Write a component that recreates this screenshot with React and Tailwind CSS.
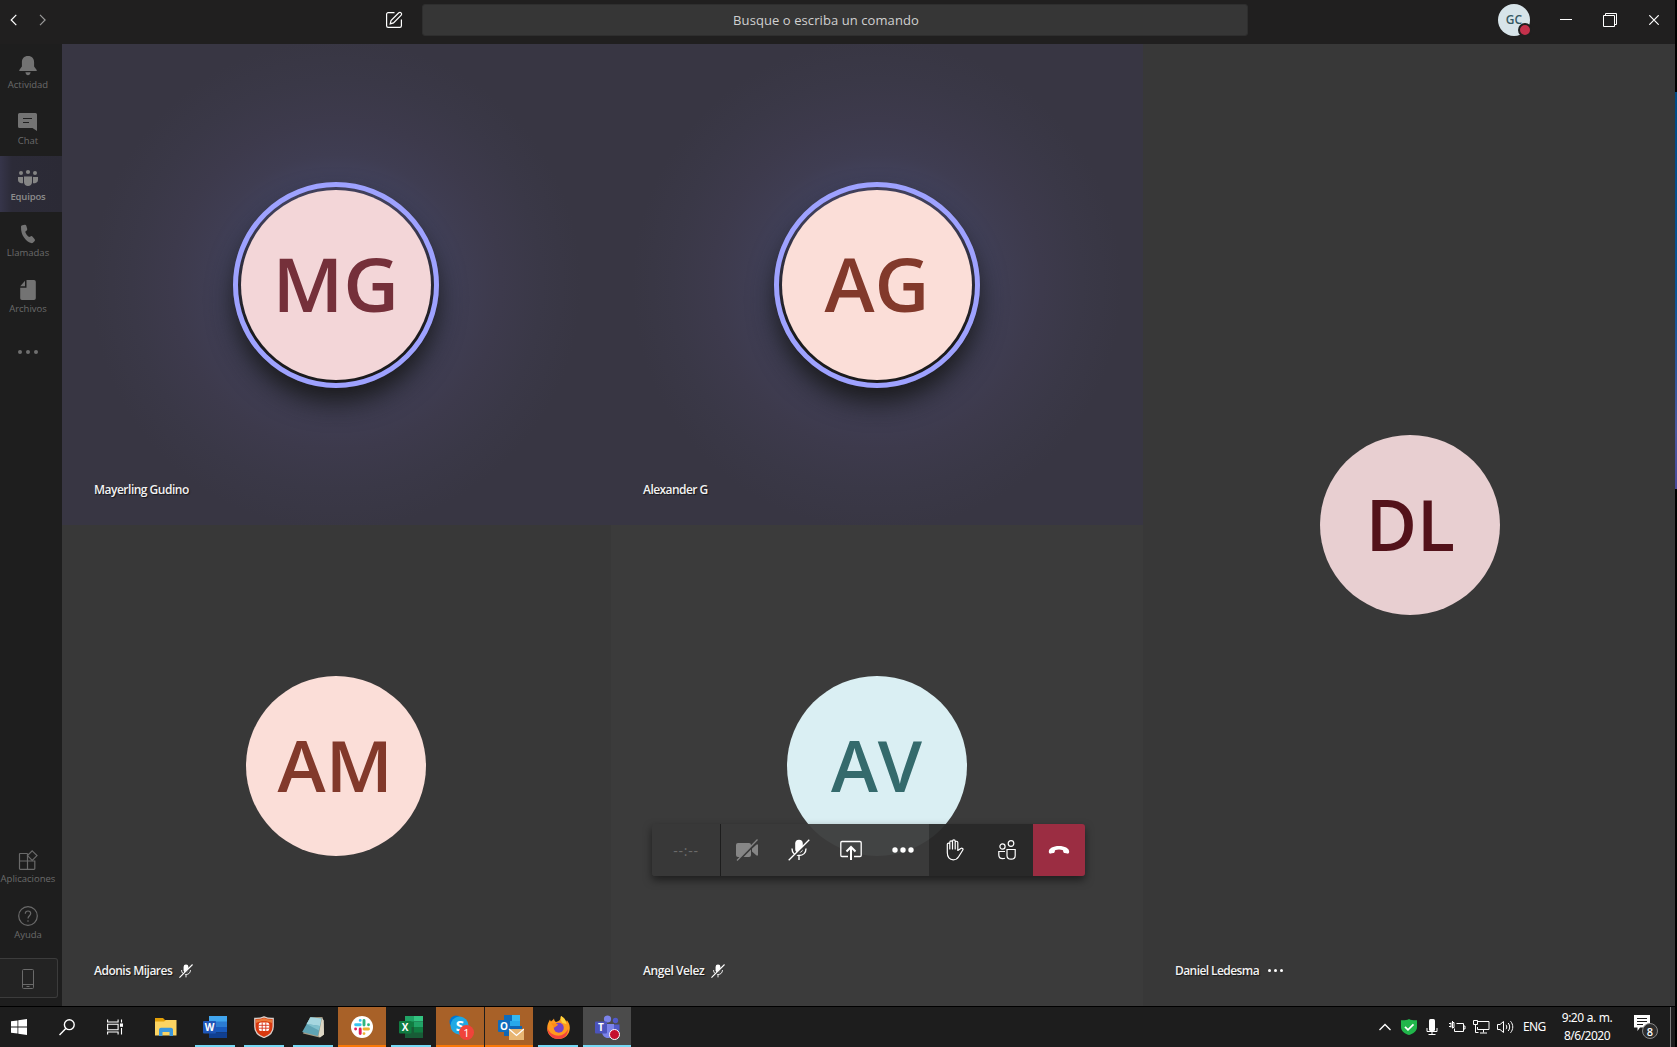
import React from "react";

/* ---------- icons ---------- */

function MicOff({ size, slash = 1.1 }) {
  return (
    <svg width={size} height={size} viewBox="0 0 22 22" fill="none">
      <rect x="7.2" y="0.8" width="7.6" height="13" rx="3.8" fill="#fff" />
      <path d="M4 9.5c0 4.3 2.8 7 7 7s7-2.700 7-7M11 16.500V21" stroke="#fff" strokeWidth="1.4" />
      <path d="M1.600 22L22 1.800" stroke="#383838" strokeWidth={slash * 2.200} />
      <path d="M.7 21.300L21.300.8" stroke="#fff" strokeWidth={slash * 1.200} />
    </svg>
  );
}

const sideIcons = {
  bell: (
    <svg width="20" height="20" viewBox="0 0 20 20" fill="currentColor">
      <path d="M10 0C6 0 3.900 2.700 3.900 6.300v4.200L1.300 14.100V15h17.400v-.9l-2.600-3.600V6.300C16.100 2.700 14 0 10 0zM7.400 16.300h5.200c-.3 2-1.300 3-2.600 3s-2.300-1-2.600-3z" />
    </svg>
  ),
  chat: (
    <svg width="20" height="20" viewBox="0 0 20 20">
      <path d="M1.500 1h16a1.500 1.500 0 0 1 1.500 1.500V19l-4.500-3H1.500A1.500 1.500 0 0 1 0 14.500v-12A1.500 1.500 0 0 1 1.500 1z" fill="currentColor" />
      <path d="M5 6.500h9M5 10.500h6" stroke="#1f1f1f" strokeWidth="1.200" />
    </svg>
  ),
  teams: (
    <svg width="20" height="20" viewBox="0 0 20 20" fill="currentColor">
      <circle cx="3" cy="5" r="2" />
      <circle cx="10" cy="4" r="2.100" />
      <circle cx="17" cy="5" r="2" />
      <path d="M6 8.500h8V14c0 2.500-1.700 4-4 4s-4-1.500-4-4zM0 9h5v6.300C2 15.300 0 14.500 0 12zM20 9h-5v6.300c3 0 5-.8 5-3.300z" />
    </svg>
  ),
  phone: (
    <svg width="20" height="20" viewBox="0 0 20 20" fill="currentColor">
      <path d="M4.300 1.300 6.800.8c.8-.1 1.300.3 1.500 1l.9 3c.2.7 0 1.200-.5 1.600L7.200 7.700c.7 2.200 2 3.900 3.900 5.200l1.900-.7c.6-.2 1.200 0 1.600.5l2.100 2.500c.4.6.4 1.200 0 1.700l-1.500 1.700c-.6.6-1.300.7-2.100.5C7.500 17.300 2.800 11 3 3c0-.9.5-1.500 1.300-1.700z" />
    </svg>
  ),
  file: (
    <svg width="20" height="20" viewBox="0 0 20 20" fill="currentColor">
      <path d="M8.500 0H16a1.800 1.800 0 0 1 1.800 1.800v16.400A1.800 1.800 0 0 1 16 20H4a1.800 1.800 0 0 1-1.800-1.800V7.800h6.300z" />
      <path d="M7 .8V6.300H2.200z" />
    </svg>
  ),
  apps: (
    <svg width="20" height="20" viewBox="0 0 20 20" fill="none" stroke="currentColor" strokeWidth="1.200">
      <path d="M9.500 3.500H2A.8.800 0 0 0 1.500 4v14.500a.8.800 0 0 0 .8.800H16a.8.800 0 0 0 .8-.8V11H1.500M9.500 3.500v15.800M9.500 11V8" />
      <path d="M14.200.8 19 5.600l-4.800 4.800-4.700-4.800z" />
    </svg>
  ),
  help: (
    <svg width="20" height="20" viewBox="0 0 20 20" fill="none" stroke="currentColor" strokeWidth="1.200">
      <circle cx="10" cy="10" r="9.300" />
      <path d="M7.300 7.800c0-1.700 1.100-2.800 2.700-2.800s2.700 1 2.700 2.500c0 2.200-2.700 2.300-2.700 5M10 14.200v1.600" />
    </svg>
  ),
};

/* ---------- top bar ---------- */

function TopBar() {
  return (
    <header className="h-[44px] shrink-0 flex items-center bg-[#201f1f] text-white">
      <div className="flex items-center w-[422px] h-[40px] mb-1 shrink-0">
        <svg className="ml-[10px]" width="8" height="12" viewBox="0 0 8 12" fill="none" stroke="#fff" strokeWidth="1.200"><path d="M6.300.8 1.200 6l5.100 5.200" /></svg>
        <svg className="ml-[21px]" width="8" height="12" viewBox="0 0 8 12" fill="none" stroke="#9a9a9a" strokeWidth="1.200"><path d="M1 .8 6.100 6 1 11.200" /></svg>
        <svg className="ml-[338px]" width="18" height="18" viewBox="0 0 18 18" fill="none" stroke="#fff" strokeWidth="1.200">
          <path d="M9.500 1.600H3.200A1.600 1.600 0 0 0 1.600 3.200v11.600c0 .9.700 1.600 1.600 1.600h11.600c.9 0 1.600-.7 1.600-1.600V8.500" />
          <path d="m5.200 12.800.8-3.300 7.800-7.700c1.600-1.300 3.700.7 2.400 2.400l-7.700 7.700z" />
        </svg>
      </div>
      <div className="w-[826px] h-[32px] mb-[4px] shrink-0 rounded-[3px] bg-[#363636] border border-[#2e2e2e] flex items-center justify-center">
        <span className="font-['Open_Sans',sans-serif] text-[13px] leading-[20px] tracking-[0.08px] text-[#d0d0d0] mb-[1px] mr-[18px] whitespace-nowrap">Busque o escriba un comando</span>
      </div>
      <div className="flex items-center h-[40px] mb-1 ml-[250px]">
        <div className="relative size-[32px] rounded-full bg-[#d7e4e9] flex items-center justify-center font-['Open_Sans',sans-serif] font-semibold text-[12px] text-[#355964]">
          GC
          <span className="absolute left-[20px] top-[19px] size-[14px] rounded-full bg-[#c4314b] border-2 border-[#201f1f]" />
        </div>
        <svg className="ml-[30px]" width="12" height="14" viewBox="0 0 12 14"><path d="M0 6.500h12" stroke="#fff" /></svg>
        <svg className="ml-[31px]" width="14" height="14" viewBox="0 0 14 14" fill="none" stroke="#fff"><path d="M.5 2.500h11v11H.5zM2.500 2.500v-2h11v11h-2" /></svg>
        <svg className="ml-[32px]" width="10" height="10" viewBox="0 0 10 10" fill="none" stroke="#fff" strokeWidth="1.200"><path d="M.3.3l9.400 9.400M9.700.3.3 9.700" /></svg>
      </div>
    </header>
  );
}

/* ---------- left rail ---------- */

function RailItem({ icon, label, active, dim }) {
  return (
    <div className={active ? "h-[56px] bg-[linear-gradient(90deg,#36354a_0%,#2c2b38_12px,#2b2a35_100%)] text-[#858585]" : dim ? "h-[56px] text-[#6a6a6a]" : "h-[56px] text-[#737373]"}>
      <div className="w-[56px] h-full flex flex-col items-center pt-[12px]">
        {sideIcons[icon]}
        <span className={active ? "mt-[2px] font-['Open_Sans',sans-serif] font-semibold text-[9.500px] leading-[14px] tracking-[-0.15px] text-[#8c8c8c] whitespace-nowrap" : "mt-[2px] font-['Open_Sans',sans-serif] font-medium text-[9.500px] leading-[14px] tracking-[0px] text-[#6b6b6b] whitespace-nowrap"}>
          {label}
        </span>
      </div>
    </div>
  );
}

function Rail() {
  return (
    <nav className="w-[62px] shrink-0 bg-[#1e1e1e] flex flex-col">
      <RailItem icon="bell" label="Actividad" />
      <RailItem icon="chat" label="Chat" />
      <RailItem icon="teams" label="Equipos" active />
      <RailItem icon="phone" label="Llamadas" />
      <RailItem icon="file" label="Archivos" />
      <div className="w-[56px] h-[56px] flex items-center justify-center gap-[4px]">
        <i className="size-[4px] rounded-full bg-[#6f6f6f]" />
        <i className="size-[4px] rounded-full bg-[#6f6f6f]" />
        <i className="size-[4px] rounded-full bg-[#6f6f6f]" />
      </div>
      <div className="mt-auto">
        <RailItem icon="apps" label="Aplicaciones" dim />
        <RailItem icon="help" label="Ayuda" dim />
      </div>
      <div className="w-[58px] h-[40px] mt-[8px] mb-[8px] rounded-r-[3px] border border-l-0 border-[#3c3c3c] bg-[#232323] flex items-center pl-[22px] pt-[2px]">
        <svg width="12" height="20" viewBox="0 0 12 20" fill="none" stroke="#6a6a6a"><rect x=".5" y=".5" width="11" height="19" rx="1" /><path d="M.5 15.500h11M4.500 17.500h3" /></svg>
      </div>
    </nav>
  );
}

/* ---------- call stage ---------- */

function Label({ name, tracking, children }) {
  return (
    <div className="absolute left-[32px] bottom-[25px] h-[20px] flex items-center text-white [text-shadow:1px_1px_1px_rgba(0,0,0,0.6)]">
      <span className={`font-['Open_Sans',sans-serif] font-semibold text-[12px] leading-[20px] whitespace-nowrap text-[#f2f2f2] ${tracking}`}>{name}</span>
      {children}
    </div>
  );
}

function Speaking({ initials, colors, name, tracking, textClass, pad = "" }) {
  return (
    <section className={`relative flex items-center justify-center overflow-hidden bg-[#373542] bg-[radial-gradient(circle_at_50%_50%,#44445f_0px,#42425c_105px,#3f3d52_130px,#3d3a4c_165px,#3a3847_205px,#383643_245px)] ${pad}`}>
      <div className="size-[206px] rounded-full border-[5px] border-[#9ea2ff] bg-[linear-gradient(180deg,#403f5a_10%,#1b1b1d_75%)] p-[3px] shadow-[0_15px_26px_rgba(24,24,24,0.95)]">
        <div className={`size-full rounded-full flex items-center justify-center font-['Open_Sans',sans-serif] font-semibold text-[75px] leading-none pb-[3px] ${colors}`}>
          <span className={textClass}>{initials}</span>
        </div>
      </div>
      <Label name={name} tracking={tracking} />
    </section>
  );
}

function Quiet({ initials, colors, bg, textClass, pad = "", children }) {
  return (
    <section className={`relative flex items-center justify-center ${bg} ${pad}`}>
      <div className={`size-[180px] rounded-full flex items-center justify-center font-['Open_Sans',sans-serif] font-semibold text-[71px] leading-none ${colors}`}>
        <span className={textClass}>{initials}</span>
      </div>
      {children}
    </section>
  );
}

function CallBar() {
  const cell = "w-[52px] h-full flex items-center justify-center";
  return (
    <div className="absolute left-[590px] top-[780px] w-[433px] h-[52px] flex rounded-[3px] overflow-visible shadow-[0_4px_8px_rgba(0,0,0,0.5)]">
      <div className="w-[68px] h-full rounded-l-[3px] bg-[#383838]/97 flex items-center justify-center text-[#6b6b6b] font-['Open_Sans',sans-serif] text-[14px] tracking-[0.8px]">--:--</div>
      <div className="w-px h-full bg-[#1d1d1d]" />
      <div className="flex bg-[#3a3a3a]/95">
        <div className={cell}>
          <svg width="22" height="22" viewBox="0 0 22 22"><rect x="0" y="4" width="15" height="14" rx="2" fill="#868686" /><path d="M16 9.500 20.500 5.500H22v11h-1.500L16 12.500z" fill="#868686" /><path d="M2 22 22.500 1.500" stroke="#3a3a3a" strokeWidth="2.200" /><path d="M1 21.500 21.500.5" stroke="#868686" strokeWidth="1.300" /></svg>
        </div>
        <div className={cell}><MicOff size={22} /></div>
        <div className={cell}>
          <svg width="22" height="22" viewBox="0 0 22 22" fill="none" stroke="#fff"><path d="M8 17.500H2A1.300 1.300 0 0 1 .8 16.200V3.800A1.300 1.300 0 0 1 2 2.500h18a1.300 1.300 0 0 1 1.200 1.300v12.400a1.300 1.300 0 0 1-1.200 1.300h-6" strokeWidth="1.300" /><path d="M11 21V8.500M6.500 12.500 11 8l4.500 4.500" strokeWidth="2" /></svg>
        </div>
        <div className={cell}>
          <svg width="22" height="6" viewBox="0 0 22 6" fill="#fff"><circle cx="3" cy="3" r="2.700" /><circle cx="11" cy="3" r="2.700" /><circle cx="19" cy="3" r="2.700" /></svg>
        </div>
      </div>
      <div className="flex bg-[#282828]/95">
        <div className={cell}>
          <svg width="18" height="22" viewBox="0 0 18 22" fill="none" stroke="#fff" strokeWidth="1.200" strokeLinejoin="round" strokeLinecap="round">
            <path d="M1.300 13.500V5.300c0-1.700 2.500-1.700 2.500 0V3.200c0-1.800 2.700-1.800 2.700 0V2.300c0-1.800 2.700-1.800 2.700 0v1.200c0-1.700 2.600-1.700 2.600 0v8l3-2c1.300-.8 2.700.5 2 1.500l-4.200 6.800c-1.200 2-2.700 3-5.300 3-3.800 0-6-2.500-6-7.300zM3.800 5.300V10M6.500 3.200V10M9.200 3.200V10" />
          </svg>
        </div>
        <div className={cell}>
          <svg className="-ml-[1px]" width="18" height="20" viewBox="0 0 18 20" fill="none" stroke="#fff" strokeWidth="1.200"><circle cx="4.500" cy="6.500" r="2.600" /><circle cx="13" cy="3.500" r="2.800" /><path d="M9 9.500h8.200v6c0 2.300-1.500 3.700-4.100 3.700S9 17.800 9 15.500zM7 11.500H.8V15c0 2.400 1.500 3.600 3.900 3.600 1 0 1.700-.1 2.300-.4" /></svg>
        </div>
      </div>
      <div className={`${cell} rounded-r-[3px] bg-[#9b2d42]`}>
        <svg width="22" height="10" viewBox="0 0 22 10" fill="#fff"><path d="M11 1C5.200 1 .8 3.200.8 6.800c0 1.300.7 2 1.900 1.800l2.600-.5c.9-.2 1.400-.7 1.500-1.600l.2-1.300c2.600-.8 5.400-.8 8 0l.2 1.300c.1.900.6 1.400 1.500 1.600l2.600.5c1.200.2 1.900-.5 1.900-1.800C21.200 3.200 16.800 1 11 1z" /></svg>
      </div>
    </div>
  );
}

function Stage() {
  return (
    <main className="relative w-[1613px] shrink-0 grid grid-cols-[549px_532px_532px]">
      <div className="grid grid-rows-2">
        <Speaking initials="MG" name="Mayerling Gudino" colors="bg-[#f3d6d8] text-[#75303a]" tracking="tracking-[-0.5px]" textClass="scale-x-[1.025]" pad="pr-[2px]" />
        <Quiet initials="AM" bg="bg-[#383838]" colors="bg-[#fbded8] text-[#82392b] pb-[3px]" textClass="scale-x-[1.025]" pad="pr-[2px]">
          <Label name="Adonis Mijares" tracking="tracking-[-0.5px]"><span className="ml-[7px]"><MicOff size={14} slash={1.500} /></span></Label>
        </Quiet>
      </div>
      <div className="grid grid-rows-2">
        <Speaking initials="AG" name="Alexander G" colors="bg-[#fbded8] text-[#82392b]" tracking="tracking-[-0.55px]" textClass="scale-x-[1.01]" />
        <Quiet initials="AV" bg="bg-[#3b3b3b]" colors="bg-[#daeff3] text-[#346a6c] pb-[3px] pr-[1px]" textClass="tracking-normal">
          <Label name="Angel Velez" tracking="tracking-[-0.43px]"><span className="ml-[7px]"><MicOff size={14} slash={1.500} /></span></Label>
        </Quiet>
      </div>
      <Quiet initials="DL" bg="bg-[#383838]" colors="bg-[#e8cfd1] text-[#53121a] pb-[4px]" textClass="scale-x-[0.985]" pad="pl-[2px]">
        <Label name="Daniel Ledesma" tracking="tracking-[-0.58px]">
          <span className="ml-[9px] mb-[2px] flex gap-[3px]"><i className="size-[3px] rounded-full bg-white" /><i className="size-[3px] rounded-full bg-white" /><i className="size-[3px] rounded-full bg-white" /></span>
        </Label>
      </Quiet>
      <CallBar />
    </main>
  );
}

/* ---------- taskbar ---------- */

function Task({ tone = "plain", children }) {
  const tones = {
    none: "bg-transparent",
    plain: "bg-transparent",
    alert: "bg-[#a86128]",
    active: "bg-[#4b4b4b]",
  };
  const lines = {
    none: "w-0",
    plain: "w-[40px] bg-[#76d9f5]",
    alert: "w-[48px] bg-[#f97808]",
    active: "w-[48px] bg-[#76d9f5]",
  };
  return (
    <div className={`w-[48px] h-[40px] flex flex-col items-center ${tones[tone]}`}>
      <div className="h-[38px] pt-[2px] flex items-center justify-center">{children}</div>
      <div className={`h-[2px] ${lines[tone]}`} />
    </div>
  );
}

function Letter({ x, y, size = 10, children }) {
  return <text x={x} y={y} fontSize={size} fontWeight="700" fill="#fff" textAnchor="middle" fontFamily="Open Sans, sans-serif">{children}</text>;
}

function Taskbar() {
  return (
    <footer className="h-[41px] w-[1675px] shrink-0 border-t border-black bg-[#1d1d1d] flex text-white">
      <div className="w-[38px] flex items-center justify-center">
        <svg width="16" height="16" viewBox="0 0 16 16" fill="#fff"><path d="M0 2.300 6.500 1.400v6.200H0zM7.300 1.300 16 0v7.600H7.300zM0 8.400h6.500v6.200L0 13.700zM7.300 8.400H16V16l-8.700-1.300z" /></svg>
      </div>
      <div className="w-[48px] ml-[5px] flex items-center justify-center">
        <svg width="16" height="17" viewBox="0 0 16 17" fill="none" stroke="#fff" strokeWidth="1.400"><circle cx="10.300" cy="5.700" r="4.900" /><path d="M6.800 9.500.5 16" /></svg>
      </div>
      <div className="w-[48px] flex items-center justify-center">
        <svg width="16" height="16" viewBox="0 0 16 16" fill="none" stroke="#fff" strokeWidth="1.100"><path d="M.6.500V3h10.500V.5M.6 15.500V13h10.500v2.500M.6 5.200h10.500v5.600H.6zM14.500.5v3M14.500 9v6.500" /><rect x="13.500" y="5" width="2.200" height="2.200" fill="#fff" /></svg>
      </div>
      <div className="ml-[3px] flex gap-px">
        <Task tone="none">
          <svg width="22" height="18" viewBox="0 0 22 18"><path d="M0 0h8l2 2h11v3H0z" fill="#e3a008" /><path d="M0 3.500h9L11 2h10.500v15.500H0z" fill="#fcd462" /><path d="M4 18v-6.500A2 2 0 0 1 6 9.800h10a2 2 0 0 1 2 1.700V18h-3.500v-4h-7v4z" fill="#3b97dd" /></svg>
        </Task>
        <Task>
          <svg width="24" height="22" viewBox="0 0 24 22"><path d="M6 0h18v6H6z" fill="#41a5ee" /><path d="M6 5.500h18V11H6z" fill="#2b7cd3" /><path d="M6 11h18v5.500H6z" fill="#185abd" /><path d="M6 16.500h18V22H6z" fill="#103f91" /><rect y="5" width="13" height="12.500" rx="1" fill="#1e56b8" /><Letter x={6.500} y={15}>W</Letter></svg>
        </Task>
        <Task>
          <svg width="20" height="22" viewBox="0 0 20 22"><path d="M10 .8c3 1.400 6 1.800 9.200 1.600v8C19.200 16 15.500 19.600 10 21.500 4.500 19.600.8 16 .8 10.400v-8C4 2.600 7 2.200 10 .8z" fill="#d9380f" stroke="#d9cfca" strokeWidth="1.300" /><path d="M10 2c2.800 1.200 5.400 1.600 8 1.500V7C13 4.500 7 4.500 2 7V3.500C4.700 3.600 7.300 3.200 10 2z" fill="#ea7a3c" /><rect x="4.800" y="6.500" width="10.400" height="8.500" rx="2" fill="#fff" /><path d="M4.800 9.300h10.400M4.800 12.200h10.400M8.200 6.500V15M11.800 6.500V15" stroke="#d7341c" strokeWidth=".9" /></svg>
        </Task>
        <Task>
          <svg width="24" height="22" viewBox="0 0 24 22"><path d="M9 1.200 21.500 1 23 18.500l-4.500 3L2 17.500z" fill="#a59c86" /><path d="m17.500 20 3.500-18 1.800 2.500.2 14-4 3z" fill="#ddd6c4" /><path d="M9.500 1.200 20.500 2.500 17 20 1.200 16z" fill="#5fa3b4" /><path d="M9.500 1.200 20.500 2.500 19 10 5.500 8z" fill="#a6d6df" /><path d="M5.500 8 19 10l-1 4.500z" fill="#7fbfcc" /></svg>
        </Task>
        <Task tone="alert">
          <svg width="22" height="22" viewBox="0 0 22 22"><circle cx="11" cy="11" r="11" fill="#fff" /><g strokeWidth="2.900" strokeLinecap="round"><path d="M9.200 4.400v.01M4.600 8.800h4.600" stroke="#36c5f0" /><path d="M13 4.400V9M17.500 8.800v.01" stroke="#2eb67d" /><path d="M17.500 13H13M13 17.600v.01" stroke="#ecb22e" /><path d="M9.200 13v4.600M4.600 13v.01" stroke="#e01e5a" /></g></svg>
        </Task>
        <Task>
          <svg width="24" height="22" viewBox="0 0 24 22"><path d="M6 0h9v6H6zM6 5.500h9V11H6z" fill="#21a366" /><path d="M15 0h9v5.500h-9z" fill="#33c481" /><path d="M15 5.500h9V11h-9z" fill="#21a366" /><path d="M6 5.500h9V11H6z" fill="#107c41" /><path d="M6 11h18v11H6z" fill="#185c37" /><path d="M15 11h9v5.500h-9z" fill="#107c41" /><rect y="5" width="12.500" height="12.500" rx="1" fill="#107c41" /><Letter x={6.200} y={15}>X</Letter></svg>
        </Task>
        <Task tone="alert">
          <svg className="ml-[3px]" width="25" height="26" viewBox="0 0 25 26"><circle cx="7" cy="8" r="6.500" fill="#0078d4" /><circle cx="14" cy="15.500" r="6.500" fill="#28a8ea" /><circle cx="10.500" cy="11.500" r="9" fill="#1fa9e4" /><Letter x={11} y={17} size={15}>S</Letter><circle cx="17.500" cy="18.500" r="7.500" fill="#f0433a" /><text x="17.500" y="22.500" fontSize="11" fill="#fff" textAnchor="middle" fontFamily="Open Sans, sans-serif">1</text></svg>
        </Task>
        <Task tone="alert">
          <svg className="ml-[4px]" width="26" height="26" viewBox="0 0 26 26"><path d="M6 1h16v11H6z" fill="#28a8ea" /><path d="M6 1h8v6H6z" fill="#0f6cbd" /><path d="M14 1h8v6h-8z" fill="#35b8f1" /><path d="M6 12h18v10H6z" fill="#1066b5" /><rect y="6" width="12" height="12" rx="1" fill="#0f6cbd" /><Letter x={6} y={15.600}>O</Letter><path d="M11 15h15v11H11z" fill="#e8b673" /><path d="m11 15 7.500 6.500L26 15" fill="none" stroke="#fff" strokeWidth="1.200" /></svg>
        </Task>
        <Task>
          <svg width="23" height="23" viewBox="0 0 23 23"><path d="M14 0c3 1.500 4.500 3.500 5 5.500 1-.3.800-1.200.8-1.500 2 2.500 3 5 3 8 0 6.500-5 11-11.300 11S.2 18.500.2 12.500C.2 8.500 1.500 6 3 3.500c.2 1 .5 1.500 1 2C5 4.500 6 4 7 2.500 7 4 8 5.500 9 6c3-.5 5-2.500 5-6z" fill="#ff9a1f" /><path d="M.3 11c1 4 4 7.500 9 8.500 5.500.8 10-2 11.500-6.500.5 6-4 10-9.300 10C5 23 .2 18.500.3 11z" fill="#f5433d" /><path d="M14 0c3 1.500 5 4.500 5.500 8l-4-1c-1.500-2-2.500-4.500-1.500-7z" fill="#ffd43a" /><circle cx="11.800" cy="11.800" r="5" fill="#7542c9" /><path d="M4 7.500c3-1 5 .5 7 .8 0 1.800-2.500 2-3.500 3.500z" fill="#ff8a16" /></svg>
        </Task>
        <Task tone="active">
          <svg className="ml-[1px]" width="25" height="25" viewBox="0 0 25 25"><circle cx="20.500" cy="5.500" r="2.700" fill="#5059c9" /><circle cx="12.500" cy="4" r="3.600" fill="#7b83eb" /><path d="M17 9.500h7.500V15c0 3-2 4.500-4.500 4.500H17z" fill="#5059c9" /><path d="M7 9h12v7.500c0 4-2.500 6.500-6 6.500s-6-2.500-6-6.500z" fill="#7b83eb" /><rect y="6.500" width="12" height="12" rx="1" fill="#4b53bc" /><Letter x={6} y={16}>T</Letter><circle cx="19.500" cy="19.500" r="5" fill="#c50f2e" stroke="#fff" /></svg>
        </Task>
      </div>
      <div className="ml-auto flex items-center h-full">
        <svg width="12" height="8" viewBox="0 0 12 8" fill="none" stroke="#fff" strokeWidth="1.300"><path d="M.5 7 6 1.500 11.500 7" /></svg>
        <svg className="ml-[10px]" width="16" height="16" viewBox="0 0 16 16"><path d="M8 0c2.500 1.300 5 1.500 8 1.300V8c0 4-3.500 6.700-8 8-4.500-1.300-8-4-8-8V1.300C3 1.500 5.500 1.300 8 0z" fill="#21b64b" /><path d="m4 7.800 3 3 5.500-5.500" fill="none" stroke="#fff" strokeWidth="1.800" /></svg>
        <svg className="ml-[9px]" width="12" height="16" viewBox="0 0 12 16" fill="none" stroke="#fff"><rect x="3" y="0" width="6" height="12" rx="1.500" fill="#fff" stroke="none" /><path d="M1 9v3.500h10V9M6 12.500V15M2.500 15.500h7" /></svg>
        <svg className="ml-[11px]" width="17" height="12" viewBox="0 0 17 12" fill="none" stroke="#fff"><path d="M7.500 2.500h7v8h-9V7.500M14.500 5h1.500v3h-1.500M0 2.500h2M0 5.500h2M3.500 0v7.500M2 1.500v5M3.500 1.500h1.500v5H3.500" /></svg>
        <svg className="ml-[7px]" width="17" height="14" viewBox="0 0 17 14" fill="none" stroke="#fff"><path d="M4.500 1.500h11.500v8H4.500V7M10.500 9.500v3M7 13h7M.5.5h4v4h-4zM2.500 4.500v8h3" /></svg>
        <svg className="ml-[7px]" width="17" height="14" viewBox="0 0 17 14" fill="none" stroke="#fff"><path d="M.5 4.500H3L6.500 1.500v11L3 9.500H.5zM9 4.800c1 1.300 1 3.100 0 4.400M11.200 3c2 2.500 2 5.500 0 8M13.500 1.200c3 3.500 3 8 0 11.600" /></svg>
        <span className="w-[24px] ml-[9px] font-['Noto_Sans',sans-serif] text-[12px] tracking-[-0.6px] text-white">ENG</span>
        <div className="w-[56px] ml-[12px] mr-[1px] flex flex-col items-center font-['Noto_Sans',sans-serif] text-[12px] leading-[18px] tracking-[-0.5px] text-white whitespace-nowrap">
          <span className="[word-spacing:0.5px]">9:20 a. m.</span>
          <span>8/6/2020</span>
        </div>
        <div className="relative w-[25px] h-[24px] ml-[18px]">
          <svg width="16" height="17" viewBox="0 0 16 17"><path d="M0 0h16v12.500H6L3.500 16v-3.500H0z" fill="#fff" /><path d="M3 3.500h10M3 6.500h10M3 9.500h6" stroke="#1d1d1d" /></svg>
          <span className="absolute left-[8px] top-[8px] size-[16px] rounded-full bg-[#2d2d2d] border border-[#8a8a8a] flex items-center justify-center font-['Open_Sans',sans-serif] font-semibold text-[11px] leading-none text-white">8</span>
        </div>
        <div className="w-px h-full ml-[11px] mr-[4px] bg-[#7a7a7a]" />
      </div>
    </footer>
  );
}

export default function App() {
  return (
    <div className="w-[1677px] h-[1047px] flex overflow-hidden bg-black">
      <div className="w-[1675px] h-full flex flex-col">
        <TopBar />
        <div className="h-[962px] flex">
          <Rail />
          <Stage />
        </div>
        <Taskbar />
      </div>
      <div className="w-[2px] h-[397px] mt-[92px] bg-[linear-gradient(180deg,#004a85_0%,#0a5596_50%,#4a58a0_85%,#4a4a9c_100%)]" />
    </div>
  );
}
